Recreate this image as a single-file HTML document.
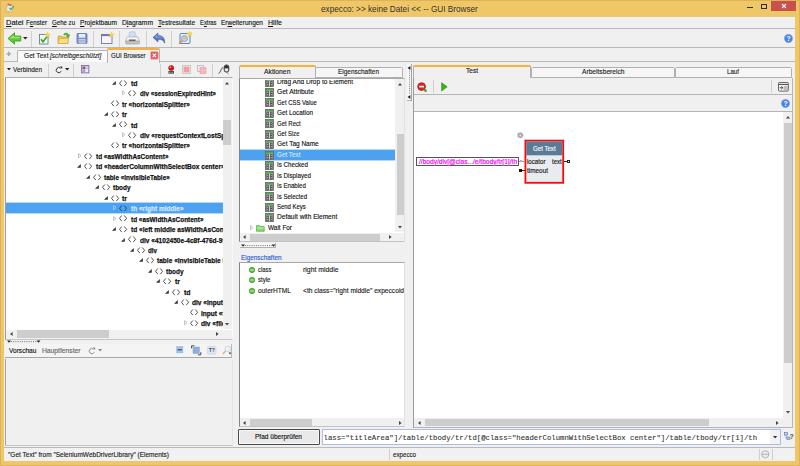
<!DOCTYPE html>
<html><head><meta charset="utf-8"><title>expecco</title>
<style>
*{box-sizing:border-box;margin:0;padding:0}
html,body{width:800px;height:466px;overflow:hidden;background:#efc766;box-shadow:inset 0 0 0 1px #ddb25a;font-family:"Liberation Sans",sans-serif;font-size:8px;color:#111}
.a{position:absolute}
.t{position:absolute;white-space:nowrap;transform-origin:0 50%;color:#1c1c1c;-webkit-text-stroke:.15px currentColor}
.t.b{-webkit-text-stroke:.25px currentColor}
.b{font-weight:bold}
.i{font-style:italic}
.clip{position:absolute;overflow:hidden}
svg{position:absolute;overflow:visible}
</style></head><body>
<div class="t" style="left:321px;top:2.7px;font-size:9.6px;line-height:12.0px;transform:scaleX(0.855);color:#333;-webkit-text-stroke:0;">expecco: &gt;&gt; keine Datei &lt;&lt; -- GUI Browser</div>
<svg style="left:5px;top:3px" width="11" height="11" viewBox="0 0 11 11"><g transform="rotate(16 5 5.5)"><rect x="1.4" y="1.6" width="6.6" height="7.2" rx=".8" fill="#dfe6f4" stroke="#e0a050" stroke-width=".7"/><rect x="1.6" y="1.4" width="4" height="1.5" fill="#c06a60"/></g><path d="M4.6 5l1.3 1.6L8.8 3" stroke="#5cb83a" stroke-width="1.4" fill="none"/></svg>
<div class="a" style="left:771.3px;top:0.5px;width:24.7px;height:10.5px;background:#c9504d;"></div>
<svg style="left:771px;top:0px" width="25" height="11" viewBox="0 0 25 11"><path d="M11 4l4 4M15 4l-4 4" stroke="#fff" stroke-width="1.1"/></svg>
<div class="a" style="left:747px;top:7px;width:5.5px;height:1.4px;background:#2c2c2c;"></div>
<div class="a" style="left:761px;top:4px;width:6.3px;height:5.2px;background:transparent;border:1px solid #2c2c2c;border-top-width:1.6px"></div>
<div class="a" style="left:4.3px;top:17px;width:791px;height:444px;background:#f0f0f0;"></div>
<div class="t" style="left:6px;top:18.0px;font-size:8.0px;line-height:10.0px;transform:scaleX(0.937);color:#151515;"><u>D</u>atei</div>
<div class="t" style="left:26px;top:18.0px;font-size:8.0px;line-height:10.0px;transform:scaleX(0.774);color:#151515;">F<u>e</u>nster</div>
<div class="t" style="left:52px;top:18.0px;font-size:8.0px;line-height:10.0px;transform:scaleX(0.761);color:#151515;"><u>G</u>ehe zu</div>
<div class="t" style="left:80px;top:18.0px;font-size:8.0px;line-height:10.0px;transform:scaleX(0.824);color:#151515;"><u>P</u>rojektbaum</div>
<div class="t" style="left:122px;top:18.0px;font-size:8.0px;line-height:10.0px;transform:scaleX(0.840);color:#151515;">D<u>i</u>agramm</div>
<div class="t" style="left:158px;top:18.0px;font-size:8.0px;line-height:10.0px;transform:scaleX(0.816);color:#151515;"><u>T</u>estresultate</div>
<div class="t" style="left:200px;top:18.0px;font-size:8.0px;line-height:10.0px;transform:scaleX(0.728);color:#151515;">E<u>x</u>tras</div>
<div class="t" style="left:221px;top:18.0px;font-size:8.0px;line-height:10.0px;transform:scaleX(0.814);color:#151515;">Er<u>w</u>eiterungen</div>
<div class="t" style="left:268px;top:18.0px;font-size:8.0px;line-height:10.0px;transform:scaleX(0.875);color:#151515;"><u>H</u>ilfe</div>
<div class="a" style="left:4.3px;top:28.3px;width:791px;height:1px;background:#b9b9b9;"></div>
<div class="a" style="left:31px;top:30.5px;width:1px;height:16px;background:#d0d0d0;"></div>
<div class="a" style="left:93.3px;top:30.5px;width:1px;height:16px;background:#d0d0d0;"></div>
<div class="a" style="left:119px;top:30.5px;width:1px;height:16px;background:#d0d0d0;"></div>
<div class="a" style="left:146px;top:30.5px;width:1px;height:16px;background:#d0d0d0;"></div>
<div class="a" style="left:171px;top:30.5px;width:1px;height:16px;background:#d0d0d0;"></div>
<div class="a" style="left:4.3px;top:46.5px;width:791px;height:1px;background:#b9b9b9;"></div>
<svg style="left:7px;top:32px" width="16" height="13" viewBox="0 0 16 13"><path d="M1 6.5L7.5 .8V4h6.3v5H7.5v3.2z" fill="#5ec832" stroke="#3a9a1c" stroke-width=".8" stroke-linejoin="round"/><path d="M2.6 6.4L6.8 2.8v2h6v1.4z" fill="#a6ec7c" opacity=".8"/></svg>
<svg style="left:23px;top:37px" width="5" height="3" viewBox="0 0 5 3"><path d="M0 0h4.6L2.3 2.6z" fill="#222"/></svg>
<svg style="left:38px;top:32px" width="13" height="13" viewBox="0 0 13 13"><rect x="1.5" y="2.5" width="8.5" height="9.5" fill="#f4f6f8" stroke="#6c8294" stroke-width=".9"/><path d="M3 7.2l2 2.6L9 4.4" stroke="#2fae22" stroke-width="1.6" fill="none"/><path d="M9.6 .3l.9 1.6 1.8.3-1.3 1.3.3 1.8-1.7-.9-1.6.9.3-1.8L7 2.2l1.8-.3z" fill="#f6d84a" stroke="#d8b020" stroke-width=".3"/></svg>
<svg style="left:57px;top:31px" width="14" height="14" viewBox="0 0 14 14"><path d="M1 5h4l1 1h5v6.5H1z" fill="#ecc458" stroke="#c89a34" stroke-width=".6"/><path d="M1 12.5l1.6-5h9.2l-1.3 5z" fill="#f8de82" stroke="#d0a43c" stroke-width=".6"/><path d="M6.5 3.2c2-1.8 4.4-1.4 5 .8l1.2-.4-1 3-2.6-1.6 1.1-.4c-.5-1.2-1.8-1.3-2.9-.4z" fill="#4cb82e" stroke="#2f8f1a" stroke-width=".4"/></svg>
<svg style="left:76px;top:32px" width="12" height="13" viewBox="0 0 12 13"><rect x="1" y="1.5" width="10" height="10" rx=".8" fill="#7e94ca" stroke="#5068a8" stroke-width=".7"/><rect x="2.8" y="2" width="6.4" height="3.6" fill="#e8eef8"/><rect x="2.6" y="7" width="6.8" height="4.5" fill="#c8d4ec"/><path d="M3 8.4h6M3 9.8h6" stroke="#8498c4" stroke-width=".6"/></svg>
<svg style="left:100px;top:32px" width="14" height="13" viewBox="0 0 14 13"><rect x="1.5" y="2.5" width="10.5" height="9" fill="#f6f4f6" stroke="#6a7ab4" stroke-width=".9"/><rect x="1.5" y="2.5" width="10.5" height="1.6" fill="#6a7ab4"/><path d="M11.4 .2l.9 1.6 1.8.3-1.3 1.3.3 1.8-1.7-.9-1.6.9.3-1.8-1.3-1.3 1.8-.3z" fill="#f6d84a" stroke="#d8b020" stroke-width=".3"/></svg>
<svg style="left:125px;top:31px" width="15" height="14" viewBox="0 0 15 14"><path d="M4.6 .8h5.2l1.4 5.4H3.6z" fill="#cfe0f6" stroke="#9cb4d4" stroke-width=".5" transform="rotate(-6 7.5 3.5)"/><path d="M2 6h11l1.4 4.2H.6z" fill="#f0f0f0" stroke="#a4a4a4" stroke-width=".6"/><path d="M.6 10.2h13.8v2.2l-.6.6H1.2l-.6-.6z" fill="#c4c4c4" stroke="#8c8c8c" stroke-width=".5"/><path d="M4 9.2h6.6" stroke="#555" stroke-width="1.3"/><path d="M2.4 7.2h10" stroke="#fff" stroke-width=".8"/></svg>
<svg style="left:152px;top:32px" width="14" height="13" viewBox="0 0 14 13"><path d="M1 5.4L6 1v2.6c4.4 0 7 2.2 6.6 7.6C11.6 8.2 9.6 7.2 6 7.3v2.6z" fill="#5878c6" stroke="#3c5aa4" stroke-width=".6" stroke-linejoin="round"/><path d="M2.4 5.3L5.4 2.6v1.8c2.6 0 4.6.6 5.8 2.4C9.6 5.8 7.8 5.6 5.4 5.7z" fill="#8ea8e4" opacity=".8"/></svg>
<svg style="left:177px;top:31px" width="16" height="14" viewBox="0 0 16 14"><rect x="3" y="2.5" width="10" height="10" rx="1" fill="#e6ecf8" stroke="#5a74b8" stroke-width=".9"/><circle cx="7.5" cy="7.5" r="3" fill="#b8d0f0" stroke="#6a8ac8" stroke-width=".6"/><circle cx="8" cy="6.8" r="1.5" fill="#f0c040"/><path d="M5.6 9.6L2 12.6" stroke="#d89030" stroke-width="1.4"/><path d="M12.6 .2l.9 1.6 1.8.3-1.3 1.3.3 1.8-1.7-.9-1.6.9.3-1.8-1.3-1.3 1.8-.3z" fill="#f6d84a" stroke="#d8b020" stroke-width=".3"/></svg>
<svg style="left:783.8px;top:33.7px" width="9" height="9" viewBox="0 0 9 9"><circle cx="4.5" cy="4.5" r="4.2" fill="#4a82e4" stroke="#8fb4f4" stroke-width=".6"/><text x="4.5" y="7.1" font-size="6.8" font-weight="bold" fill="#fff" text-anchor="middle" font-family="Liberation Sans, sans-serif">?</text></svg>
<div class="a" style="left:4.3px;top:61.2px;width:791px;height:1px;background:#b9b9b9;"></div>
<svg style="left:6.4px;top:51.4px" width="6" height="6" viewBox="0 0 6 6"><path d="M2.8 .6v4.4M.6 2.8h4.4" stroke="#a0a0a0" stroke-width="1.2"/></svg>
<div class="a" style="left:17.3px;top:50px;width:90.5px;height:12px;background:#fafafa;border:1px solid #b4b4b4;border-bottom:none;border-radius:1.5px 1.5px 0 0"></div>
<div class="t" style="left:24px;top:51.2px;font-size:8.0px;line-height:10.0px;transform:scaleX(0.826);">Get Text</div>
<div class="t i" style="left:50px;top:51.2px;font-size:8.0px;line-height:10.0px;transform:scaleX(0.797);">[schreibgeschützt]</div>
<div class="a" style="left:107.3px;top:48px;width:52.4px;height:14.6px;background:#f0f0f0;border:1px solid #b4b4b4;border-bottom:none;border-top:2px solid #f7b038;border-radius:1.5px 1.5px 0 0"></div>
<div class="t" style="left:111.4px;top:51.2px;font-size:8.0px;line-height:10.0px;transform:scaleX(0.756);">GUI Browser</div>
<svg style="left:149.8px;top:50.8px" width="9" height="9" viewBox="0 0 9 9"><rect x=".5" y=".5" width="7.8" height="7.8" rx="1.2" fill="#e05a64" stroke="#eeb0b4" stroke-width=".8"/><path d="M2.7 2.7l3.4 3.4M6.1 2.7L2.7 6.1" stroke="#fff" stroke-width="1.1"/></svg>
<svg style="left:7px;top:67.5px" width="4" height="3" viewBox="0 0 4 3"><path d="M0 0h4L2 2.6z" fill="#222"/></svg>
<div class="t" style="left:13px;top:64.5px;font-size:8.0px;line-height:10.0px;transform:scaleX(0.805);">Verbinden</div>
<div class="a" style="left:48.3px;top:63.5px;width:1px;height:13px;background:#cfcfcf;"></div>
<svg style="left:54.5px;top:65.5px" width="8" height="8" viewBox="0 0 8 8"><path d="M5.6 2.2A2.6 2.6 0 1 0 6.2 5.2" fill="none" stroke="#333" stroke-width="1"/><path d="M4.6 .4h2.6v2.6z" fill="#333"/></svg>
<svg style="left:65px;top:68px" width="5" height="3" viewBox="0 0 5 3"><path d="M0 0h4.4L2.2 2.5z" fill="#222"/></svg>
<div class="a" style="left:73px;top:63.5px;width:1px;height:13px;background:#cfcfcf;"></div>
<svg style="left:80.5px;top:64.8px" width="9" height="9" viewBox="0 0 9 9"><rect x=".5" y=".5" width="7.4" height="7.4" fill="#c8cce8" stroke="#6a6e9c" stroke-width=".8"/><rect x="1.6" y="1.6" width="2.6" height="2.4" fill="#d83848"/><rect x="4.6" y="4.6" width="2.4" height="2.2" fill="#f4f4fa"/><rect x="1.6" y="4.6" width="2.4" height="2.2" fill="#9aa0cc"/></svg>
<div class="a" style="left:160px;top:63.5px;width:1px;height:13px;background:#cfcfcf;"></div>
<svg style="left:166.5px;top:64.5px" width="9" height="10" viewBox="0 0 9 10"><circle cx="4.2" cy="3" r="2.6" fill="#d81818" stroke="#8c1010" stroke-width=".5"/><circle cx="3.4" cy="2.2" r=".9" fill="#f88"/><rect x="1.4" y="6" width="5.6" height="2.6" fill="#444"/><path d="M2 7.3h4.4" stroke="#ddd" stroke-width=".7" stroke-dasharray="1 .6"/></svg>
<svg style="left:181.5px;top:64.6px" width="9" height="9" viewBox="0 0 9 9"><rect x=".5" y=".5" width="8" height="8" fill="#f0e4e4" stroke="#c4c4c4" stroke-width=".8"/><rect x="1.7" y="1.7" width="5.6" height="5.6" fill="#f49aa0"/></svg>
<svg style="left:197px;top:64.8px" width="10" height="9" viewBox="0 0 10 9"><rect x=".5" y=".5" width="6" height="6" fill="#ececec" stroke="#b4b4b4" stroke-width=".7"/><rect x="3" y="2.6" width="6" height="6" fill="#f8b0b6" stroke="#e0a0a4" stroke-width=".6"/><path d="M3 5.6h6M6 2.6v6" stroke="#fbd0d2" stroke-width=".5"/></svg>
<div class="a" style="left:212.3px;top:63.5px;width:1px;height:13px;background:#cfcfcf;"></div>
<svg style="left:218px;top:64px" width="12" height="11" viewBox="0 0 12 11"><path d="M.5 9.5C3 9 2.5 4 5 3.5" fill="none" stroke="#333" stroke-width=".8"/><rect x="6.2" y="1" width="4.6" height="7" rx="2" fill="#e8e8e8" stroke="#222" stroke-width=".9"/><path d="M6.2 4h4.6M8.5 1v3" stroke="#222" stroke-width=".7"/><path d="M6.4 4V3a2.2 2.2 0 0 1 4.2 0v1z" fill="#333"/><path d="M8.5 8l2 1.8" stroke="#444" stroke-width=".7"/></svg>
<div class="a" style="left:5px;top:77.2px;width:227.5px;height:263px;background:#fff;border:1px solid #c6c6c6;border-left-color:#9c9c9c;border-top-color:#adadad;border-right-color:#f8f8f8"></div>
<div class="a" style="left:222.5px;top:78.3px;width:9px;height:251px;background:#f0f0f0;"></div>
<div class="a" style="left:223px;top:120px;width:8px;height:24.6px;background:#cdcdcd;"></div>
<svg style="left:225px;top:81.6px" width="4" height="3" viewBox="0 0 4 3"><path d="M0 2.6L2 0l2 2.6z" fill="#444"/></svg>
<svg style="left:225px;top:323px" width="4" height="3" viewBox="0 0 4 3"><path d="M0 0h4L2 2.6z" fill="#444"/></svg>
<div class="a" style="left:6px;top:329.5px;width:225.5px;height:9.8px;background:#f0f0f0;"></div>
<div class="a" style="left:16.5px;top:330px;width:92.5px;height:7.8px;background:#cdcdcd;"></div>
<svg style="left:10px;top:332px" width="3" height="4" viewBox="0 0 3 4"><path d="M2.6 0v4L0 2z" fill="#444"/></svg>
<svg style="left:215.5px;top:332px" width="3" height="4" viewBox="0 0 3 4"><path d="M0 0v4l2.6-2z" fill="#444"/></svg>
<div class="clip" style="left:6px;top:78.3px;width:216.5px;height:251.2px">
<div class="t b" style="left:124.7px;top:0.5px;font-size:8.0px;line-height:10.0px;transform:scaleX(0.861);color:#111;">td</div>
<svg style="left:113.3px;top:1.3px" width="8" height="7" viewBox="0 0 8 7"><path d="M2.8 .5L.5 3.3l2.3 2.8M5.3 .5L7.6 3.3 5.3 6.1" fill="none" stroke="#333" stroke-width=".85"/></svg>
<svg style="left:106.4px;top:2.5px" width="4" height="4" viewBox="0 0 4 4"><path d="M3.8 0v3.8H0z" fill="#333"/></svg>
<div class="t b" style="left:133.5px;top:10.95px;font-size:8.0px;line-height:10.0px;transform:scaleX(0.781);color:#111;">div &laquo;sessionExpiredHint&raquo;</div>
<svg style="left:122.1px;top:11.75px" width="8" height="7" viewBox="0 0 8 7"><path d="M2.8 .5L.5 3.3l2.3 2.8M5.3 .5L7.6 3.3 5.3 6.1" fill="none" stroke="#333" stroke-width=".85"/></svg>
<svg style="left:115.9px;top:12.15px" width="4" height="6" viewBox="0 0 4 6"><path d="M.5 .6v4.2L3 2.7z" fill="none" stroke="#a8a8a8" stroke-width=".7"/></svg>
<div class="t b" style="left:115.9px;top:21.4px;font-size:8.0px;line-height:10.0px;transform:scaleX(0.822);color:#111;">tr &laquo;horizontalSplitter&raquo;</div>
<svg style="left:104.5px;top:22.2px" width="8" height="7" viewBox="0 0 8 7"><path d="M2.8 .5L.5 3.3l2.3 2.8M5.3 .5L7.6 3.3 5.3 6.1" fill="none" stroke="#333" stroke-width=".85"/></svg>
<div class="t b" style="left:115.9px;top:31.85px;font-size:8.0px;line-height:10.0px;transform:scaleX(0.865);color:#111;">tr</div>
<svg style="left:104.5px;top:32.65px" width="8" height="7" viewBox="0 0 8 7"><path d="M2.8 .5L.5 3.3l2.3 2.8M5.3 .5L7.6 3.3 5.3 6.1" fill="none" stroke="#333" stroke-width=".85"/></svg>
<svg style="left:97.6px;top:33.85px" width="4" height="4" viewBox="0 0 4 4"><path d="M3.8 0v3.8H0z" fill="#333"/></svg>
<div class="t b" style="left:124.7px;top:42.3px;font-size:8.0px;line-height:10.0px;transform:scaleX(0.861);color:#111;">td</div>
<svg style="left:113.3px;top:43.1px" width="8" height="7" viewBox="0 0 8 7"><path d="M2.8 .5L.5 3.3l2.3 2.8M5.3 .5L7.6 3.3 5.3 6.1" fill="none" stroke="#333" stroke-width=".85"/></svg>
<svg style="left:106.4px;top:44.3px" width="4" height="4" viewBox="0 0 4 4"><path d="M3.8 0v3.8H0z" fill="#333"/></svg>
<div class="t b" style="left:133.5px;top:52.75px;font-size:8.0px;line-height:10.0px;transform:scaleX(0.820);color:#111;">div &laquo;requestContextLostSplitter&raquo;</div>
<svg style="left:122.1px;top:53.55px" width="8" height="7" viewBox="0 0 8 7"><path d="M2.8 .5L.5 3.3l2.3 2.8M5.3 .5L7.6 3.3 5.3 6.1" fill="none" stroke="#333" stroke-width=".85"/></svg>
<svg style="left:115.9px;top:53.95px" width="4" height="6" viewBox="0 0 4 6"><path d="M.5 .6v4.2L3 2.7z" fill="none" stroke="#a8a8a8" stroke-width=".7"/></svg>
<div class="t b" style="left:115.9px;top:63.2px;font-size:8.0px;line-height:10.0px;transform:scaleX(0.822);color:#111;">tr &laquo;horizontalSplitter&raquo;</div>
<svg style="left:104.5px;top:64.0px" width="8" height="7" viewBox="0 0 8 7"><path d="M2.8 .5L.5 3.3l2.3 2.8M5.3 .5L7.6 3.3 5.3 6.1" fill="none" stroke="#333" stroke-width=".85"/></svg>
<div class="t b" style="left:89.5px;top:73.65px;font-size:8.0px;line-height:10.0px;transform:scaleX(0.804);color:#111;">td &laquo;asWidthAsContent&raquo;</div>
<svg style="left:78.1px;top:74.45px" width="8" height="7" viewBox="0 0 8 7"><path d="M2.8 .5L.5 3.3l2.3 2.8M5.3 .5L7.6 3.3 5.3 6.1" fill="none" stroke="#333" stroke-width=".85"/></svg>
<svg style="left:71.9px;top:74.85px" width="4" height="6" viewBox="0 0 4 6"><path d="M.5 .6v4.2L3 2.7z" fill="none" stroke="#a8a8a8" stroke-width=".7"/></svg>
<div class="t b" style="left:89.5px;top:84.1px;font-size:8.0px;line-height:10.0px;transform:scaleX(0.820);color:#111;">td &laquo;headerColumnWithSelectBox center&raquo;</div>
<svg style="left:78.1px;top:84.9px" width="8" height="7" viewBox="0 0 8 7"><path d="M2.8 .5L.5 3.3l2.3 2.8M5.3 .5L7.6 3.3 5.3 6.1" fill="none" stroke="#333" stroke-width=".85"/></svg>
<svg style="left:71.2px;top:86.1px" width="4" height="4" viewBox="0 0 4 4"><path d="M3.8 0v3.8H0z" fill="#333"/></svg>
<div class="t b" style="left:98.3px;top:94.55px;font-size:8.0px;line-height:10.0px;transform:scaleX(0.801);color:#111;">table &laquo;invisibleTable&raquo;</div>
<svg style="left:86.9px;top:95.35px" width="8" height="7" viewBox="0 0 8 7"><path d="M2.8 .5L.5 3.3l2.3 2.8M5.3 .5L7.6 3.3 5.3 6.1" fill="none" stroke="#333" stroke-width=".85"/></svg>
<svg style="left:80.0px;top:96.55px" width="4" height="4" viewBox="0 0 4 4"><path d="M3.8 0v3.8H0z" fill="#333"/></svg>
<div class="t b" style="left:107.1px;top:105.0px;font-size:8.0px;line-height:10.0px;transform:scaleX(0.804);color:#111;">tbody</div>
<svg style="left:95.7px;top:105.8px" width="8" height="7" viewBox="0 0 8 7"><path d="M2.8 .5L.5 3.3l2.3 2.8M5.3 .5L7.6 3.3 5.3 6.1" fill="none" stroke="#333" stroke-width=".85"/></svg>
<svg style="left:88.8px;top:107.0px" width="4" height="4" viewBox="0 0 4 4"><path d="M3.8 0v3.8H0z" fill="#333"/></svg>
<div class="t b" style="left:115.9px;top:115.45px;font-size:8.0px;line-height:10.0px;transform:scaleX(0.865);color:#111;">tr</div>
<svg style="left:104.5px;top:116.25px" width="8" height="7" viewBox="0 0 8 7"><path d="M2.8 .5L.5 3.3l2.3 2.8M5.3 .5L7.6 3.3 5.3 6.1" fill="none" stroke="#333" stroke-width=".85"/></svg>
<svg style="left:97.6px;top:117.45px" width="4" height="4" viewBox="0 0 4 4"><path d="M3.8 0v3.8H0z" fill="#333"/></svg>
<div class="a" style="left:0px;top:124.8px;width:216.5px;height:9.8px;background:#4ca1f1;box-shadow:0 0 0 .5px #6fb2f2"></div>
<div class="t b" style="left:124.7px;top:125.9px;font-size:8.0px;line-height:10.0px;transform:scaleX(0.815);color:#d4e7fc;">th &laquo;right middle&raquo;</div>
<svg style="left:113.3px;top:126.7px" width="8" height="7" viewBox="0 0 8 7"><path d="M2.8 .5L.5 3.3l2.3 2.8M5.3 .5L7.6 3.3 5.3 6.1" fill="none" stroke="#1c3a5c" stroke-width=".85"/></svg>
<svg style="left:107.1px;top:127.1px" width="4" height="6" viewBox="0 0 4 6"><path d="M.5 .6v4.2L3 2.7z" fill="none" stroke="#c4d8ee" stroke-width=".7"/></svg>
<div class="t b" style="left:124.7px;top:136.35px;font-size:8.0px;line-height:10.0px;transform:scaleX(0.804);color:#111;">td &laquo;asWidthAsContent&raquo;</div>
<svg style="left:113.3px;top:137.15px" width="8" height="7" viewBox="0 0 8 7"><path d="M2.8 .5L.5 3.3l2.3 2.8M5.3 .5L7.6 3.3 5.3 6.1" fill="none" stroke="#333" stroke-width=".85"/></svg>
<svg style="left:107.1px;top:137.55px" width="4" height="6" viewBox="0 0 4 6"><path d="M.5 .6v4.2L3 2.7z" fill="none" stroke="#a8a8a8" stroke-width=".7"/></svg>
<div class="t b" style="left:124.7px;top:146.8px;font-size:8.0px;line-height:10.0px;transform:scaleX(0.820);color:#111;">td &laquo;left middle asWidthAsContent&raquo;</div>
<svg style="left:113.3px;top:147.6px" width="8" height="7" viewBox="0 0 8 7"><path d="M2.8 .5L.5 3.3l2.3 2.8M5.3 .5L7.6 3.3 5.3 6.1" fill="none" stroke="#333" stroke-width=".85"/></svg>
<svg style="left:106.4px;top:148.8px" width="4" height="4" viewBox="0 0 4 4"><path d="M3.8 0v3.8H0z" fill="#333"/></svg>
<div class="t b" style="left:133.5px;top:157.25px;font-size:8.0px;line-height:10.0px;transform:scaleX(0.820);color:#111;">div &laquo;4102450e-4c8f-476d-9f2a&raquo;</div>
<svg style="left:122.1px;top:158.05px" width="8" height="7" viewBox="0 0 8 7"><path d="M2.8 .5L.5 3.3l2.3 2.8M5.3 .5L7.6 3.3 5.3 6.1" fill="none" stroke="#333" stroke-width=".85"/></svg>
<svg style="left:115.2px;top:159.25px" width="4" height="4" viewBox="0 0 4 4"><path d="M3.8 0v3.8H0z" fill="#333"/></svg>
<div class="t b" style="left:142.3px;top:167.7px;font-size:8.0px;line-height:10.0px;transform:scaleX(0.779);color:#111;">div</div>
<svg style="left:130.9px;top:168.5px" width="8" height="7" viewBox="0 0 8 7"><path d="M2.8 .5L.5 3.3l2.3 2.8M5.3 .5L7.6 3.3 5.3 6.1" fill="none" stroke="#333" stroke-width=".85"/></svg>
<svg style="left:124.0px;top:169.7px" width="4" height="4" viewBox="0 0 4 4"><path d="M3.8 0v3.8H0z" fill="#333"/></svg>
<div class="t b" style="left:151.1px;top:178.15px;font-size:8.0px;line-height:10.0px;transform:scaleX(0.820);color:#111;">table &laquo;invisibleTable inputTable&raquo;</div>
<svg style="left:139.7px;top:178.95px" width="8" height="7" viewBox="0 0 8 7"><path d="M2.8 .5L.5 3.3l2.3 2.8M5.3 .5L7.6 3.3 5.3 6.1" fill="none" stroke="#333" stroke-width=".85"/></svg>
<svg style="left:132.8px;top:180.15px" width="4" height="4" viewBox="0 0 4 4"><path d="M3.8 0v3.8H0z" fill="#333"/></svg>
<div class="t b" style="left:159.9px;top:188.6px;font-size:8.0px;line-height:10.0px;transform:scaleX(0.804);color:#111;">tbody</div>
<svg style="left:148.5px;top:189.4px" width="8" height="7" viewBox="0 0 8 7"><path d="M2.8 .5L.5 3.3l2.3 2.8M5.3 .5L7.6 3.3 5.3 6.1" fill="none" stroke="#333" stroke-width=".85"/></svg>
<svg style="left:141.6px;top:190.6px" width="4" height="4" viewBox="0 0 4 4"><path d="M3.8 0v3.8H0z" fill="#333"/></svg>
<div class="t b" style="left:168.7px;top:199.05px;font-size:8.0px;line-height:10.0px;transform:scaleX(0.865);color:#111;">tr</div>
<svg style="left:157.3px;top:199.85px" width="8" height="7" viewBox="0 0 8 7"><path d="M2.8 .5L.5 3.3l2.3 2.8M5.3 .5L7.6 3.3 5.3 6.1" fill="none" stroke="#333" stroke-width=".85"/></svg>
<svg style="left:150.4px;top:201.05px" width="4" height="4" viewBox="0 0 4 4"><path d="M3.8 0v3.8H0z" fill="#333"/></svg>
<div class="t b" style="left:177.5px;top:209.5px;font-size:8.0px;line-height:10.0px;transform:scaleX(0.861);color:#111;">td</div>
<svg style="left:166.1px;top:210.3px" width="8" height="7" viewBox="0 0 8 7"><path d="M2.8 .5L.5 3.3l2.3 2.8M5.3 .5L7.6 3.3 5.3 6.1" fill="none" stroke="#333" stroke-width=".85"/></svg>
<svg style="left:159.2px;top:211.5px" width="4" height="4" viewBox="0 0 4 4"><path d="M3.8 0v3.8H0z" fill="#333"/></svg>
<div class="t b" style="left:186.3px;top:219.95px;font-size:8.0px;line-height:10.0px;transform:scaleX(0.820);color:#111;">div &laquo;inputField&raquo;</div>
<svg style="left:174.9px;top:220.75px" width="8" height="7" viewBox="0 0 8 7"><path d="M2.8 .5L.5 3.3l2.3 2.8M5.3 .5L7.6 3.3 5.3 6.1" fill="none" stroke="#333" stroke-width=".85"/></svg>
<svg style="left:168.0px;top:221.95px" width="4" height="4" viewBox="0 0 4 4"><path d="M3.8 0v3.8H0z" fill="#333"/></svg>
<div class="t b" style="left:195.1px;top:230.4px;font-size:8.0px;line-height:10.0px;transform:scaleX(0.820);color:#111;">input &laquo;text&raquo;</div>
<svg style="left:183.7px;top:231.2px" width="8" height="7" viewBox="0 0 8 7"><path d="M2.8 .5L.5 3.3l2.3 2.8M5.3 .5L7.6 3.3 5.3 6.1" fill="none" stroke="#333" stroke-width=".85"/></svg>
<div class="t b" style="left:195.1px;top:240.85px;font-size:8.0px;line-height:10.0px;transform:scaleX(0.820);color:#111;">div &laquo;fileUpload&raquo;</div>
<svg style="left:183.7px;top:241.65px" width="8" height="7" viewBox="0 0 8 7"><path d="M2.8 .5L.5 3.3l2.3 2.8M5.3 .5L7.6 3.3 5.3 6.1" fill="none" stroke="#333" stroke-width=".85"/></svg>
<svg style="left:177.5px;top:242.05px" width="4" height="6" viewBox="0 0 4 6"><path d="M.5 .6v4.2L3 2.7z" fill="none" stroke="#a8a8a8" stroke-width=".7"/></svg>
</div>
<svg style="left:7px;top:339.6px" width="36" height="4" viewBox="0 0 36 4"><path d="M0 .4h4L2 2.8zM29.5 .4h4L31.5 2.8z" fill="#222"/><path d="M4 1.6h26" stroke="#555" stroke-width=".8" stroke-dasharray="1 1.2"/></svg>
<div class="a" style="left:5px;top:343.8px;width:226.8px;height:13.9px;background:#f4f4f4;border-bottom:1px solid #a8a8a8;border-right:1px solid #b8b8b8"></div>
<div class="t" style="left:8.6px;top:345.8px;font-size:8.0px;line-height:10.0px;transform:scaleX(0.821);color:#111;">Vorschau</div>
<div class="t" style="left:42px;top:345.8px;font-size:8.0px;line-height:10.0px;transform:scaleX(0.841);color:#666;">Hauptfenster</div>
<svg style="left:87.5px;top:346.6px" width="8" height="8" viewBox="0 0 8 8"><path d="M5.6 2.2A2.6 2.6 0 1 0 6.2 5.2" fill="none" stroke="#8a8a8a" stroke-width="1"/><path d="M4.6 .4h2.6v2.6z" fill="#8a8a8a"/></svg>
<svg style="left:98px;top:349.2px" width="5" height="3" viewBox="0 0 5 3"><path d="M0 0h4.2L2.1 2.4z" fill="#8a8a8a"/></svg>
<svg style="left:176px;top:346.2px" width="8" height="8" viewBox="0 0 8 8"><rect x=".3" y=".3" width="6.8" height="6.8" fill="#8eb2de"/><path d="M2.5 .3v6.8M4.9 .3v6.8M.3 2.5h6.8M.3 4.9h6.8" stroke="#dce8f8" stroke-width=".5"/><rect x="1.6" y="2.9" width="4.2" height="1.6" fill="#3c5c94"/></svg>
<svg style="left:190.5px;top:344.6px" width="11" height="11" viewBox="0 0 11 11"><rect x="2" y="2" width="6.4" height="6.4" fill="#8cb0dc" stroke="#7ea2d0" stroke-width=".5"/><path d="M.6 3.4V.8h2.8M9.8 7.2v2.6H7" fill="none" stroke="#333" stroke-width=".9"/></svg>
<svg style="left:207px;top:345.6px" width="10" height="9" viewBox="0 0 10 9"><rect x=".4" y=".4" width="8.6" height="7.8" rx=".8" fill="#dfe7f3" stroke="#c4cede" stroke-width=".6"/><text x="4.7" y="6.3" font-size="5" font-weight="bold" fill="#3a4a68" text-anchor="middle" font-family="Liberation Sans, sans-serif">T?</text></svg>
<svg style="left:221.5px;top:345px" width="10" height="10" viewBox="0 0 10 10"><circle cx="5.8" cy="3.8" r="2.8" fill="#eaf3fc" stroke="#b4c8dc" stroke-width=".7"/><path d="M3.8 5.8L.8 9" stroke="#e4b468" stroke-width="1.3"/><path d="M6.6 7.6h2.8L8 9.4z" fill="#444"/></svg>
<div class="a" style="left:5px;top:358.5px;width:227.5px;height:87.5px;background:#f0f0f0;border:1px solid #c4c4c4;border-top:none;border-left-color:#a4a4a4;border-right-color:#e4e4e4"></div>
<div class="a" style="left:315.3px;top:66.5px;width:87.5px;height:11px;background:#f6f6f6;border:1px solid #b0b0b0;border-radius:1.5px 1.5px 0 0"></div>
<div class="t" style="left:338px;top:67.4px;font-size:8.0px;line-height:10.0px;transform:scaleX(0.809);">Eigenschaften</div>
<div class="a" style="left:239.3px;top:64.6px;width:76.4px;height:13.2px;background:#f0f0f0;border:1px solid #b0b0b0;border-bottom:none;border-top:2px solid #f7b038;border-radius:1.5px 1.5px 0 0"></div>
<div class="t" style="left:264.4px;top:67.0px;font-size:8.0px;line-height:10.0px;transform:scaleX(0.848);">Aktionen</div>
<div class="a" style="left:238.8px;top:77.6px;width:166px;height:164.8px;background:#fff;border:1px solid #c4c4c4;border-left-color:#858585;border-top-color:#a8a8a8;border-right-color:#e2e2e2"></div>
<div class="a" style="left:395.3px;top:78.6px;width:8.6px;height:153.4px;background:#f0f0f0;"></div>
<div class="a" style="left:396.5px;top:133.5px;width:7.4px;height:81.5px;background:#cdcdcd;"></div>
<svg style="left:398px;top:82.5px" width="4" height="3" viewBox="0 0 4 3"><path d="M0 2.6L2 0l2 2.6z" fill="#444"/></svg>
<svg style="left:398px;top:226px" width="4" height="3" viewBox="0 0 4 3"><path d="M0 0h4L2 2.6z" fill="#444"/></svg>
<div class="a" style="left:239.8px;top:232.6px;width:164px;height:8.9px;background:#f0f0f0;"></div>
<div class="a" style="left:250px;top:234.3px;width:130px;height:6.6px;background:#cdcdcd;"></div>
<svg style="left:243px;top:235.4px" width="3" height="4" viewBox="0 0 3 4"><path d="M2.6 0v4L0 2z" fill="#444"/></svg>
<svg style="left:389px;top:235.4px" width="3" height="4" viewBox="0 0 3 4"><path d="M0 0v4l2.6-2z" fill="#444"/></svg>
<div class="clip" style="left:239.8px;top:79.6px;width:155.5px;height:152.4px">
<div class="t" style="left:37.0px;top:-2.7px;font-size:8.0px;line-height:10.0px;transform:scaleX(0.814);color:#111;">Drag And Drop to Element</div>
<svg style="left:25.1px;top:-2.1px" width="9" height="9" viewBox="0 0 9 9"><rect x=".4" y=".4" width="8.1" height="8.1" fill="#a4a4a4" stroke="#606060" stroke-width=".8"/><rect x=".8" y=".8" width="7.3" height="1.6" fill="#48b048"/><rect x="1.5" y="2.9" width="2.3" height="5.2" fill="#505050"/><rect x="5.1" y="2.9" width="2.3" height="5.2" fill="#505050"/><path d="M2.65 3.7v1.2M2.65 6v1.3M6.25 3.7v1.2M6.25 6v1.3" stroke="#c8c8c8" stroke-width=".9"/><path d="M4.45 2.6v5.8" stroke="#e0e0e0" stroke-width=".7"/></svg>
<div class="t" style="left:37.0px;top:7.73px;font-size:8.0px;line-height:10.0px;transform:scaleX(0.828);color:#111;">Get Attribute</div>
<svg style="left:25.1px;top:8.33px" width="9" height="9" viewBox="0 0 9 9"><rect x=".4" y=".4" width="8.1" height="8.1" fill="#a4a4a4" stroke="#606060" stroke-width=".8"/><rect x=".8" y=".8" width="7.3" height="1.6" fill="#48b048"/><rect x="1.5" y="2.9" width="2.3" height="5.2" fill="#505050"/><rect x="5.1" y="2.9" width="2.3" height="5.2" fill="#505050"/><path d="M2.65 3.7v1.2M2.65 6v1.3M6.25 3.7v1.2M6.25 6v1.3" stroke="#c8c8c8" stroke-width=".9"/><path d="M4.45 2.6v5.8" stroke="#e0e0e0" stroke-width=".7"/></svg>
<div class="t" style="left:37.0px;top:18.16px;font-size:8.0px;line-height:10.0px;transform:scaleX(0.742);color:#111;">Get CSS Value</div>
<svg style="left:25.1px;top:18.76px" width="9" height="9" viewBox="0 0 9 9"><rect x=".4" y=".4" width="8.1" height="8.1" fill="#a4a4a4" stroke="#606060" stroke-width=".8"/><rect x=".8" y=".8" width="7.3" height="1.6" fill="#48b048"/><rect x="1.5" y="2.9" width="2.3" height="5.2" fill="#505050"/><rect x="5.1" y="2.9" width="2.3" height="5.2" fill="#505050"/><path d="M2.65 3.7v1.2M2.65 6v1.3M6.25 3.7v1.2M6.25 6v1.3" stroke="#c8c8c8" stroke-width=".9"/><path d="M4.45 2.6v5.8" stroke="#e0e0e0" stroke-width=".7"/></svg>
<div class="t" style="left:37.0px;top:28.59px;font-size:8.0px;line-height:10.0px;transform:scaleX(0.794);color:#111;">Get Location</div>
<svg style="left:25.1px;top:29.19px" width="9" height="9" viewBox="0 0 9 9"><rect x=".4" y=".4" width="8.1" height="8.1" fill="#a4a4a4" stroke="#606060" stroke-width=".8"/><rect x=".8" y=".8" width="7.3" height="1.6" fill="#48b048"/><rect x="1.5" y="2.9" width="2.3" height="5.2" fill="#505050"/><rect x="5.1" y="2.9" width="2.3" height="5.2" fill="#505050"/><path d="M2.65 3.7v1.2M2.65 6v1.3M6.25 3.7v1.2M6.25 6v1.3" stroke="#c8c8c8" stroke-width=".9"/><path d="M4.45 2.6v5.8" stroke="#e0e0e0" stroke-width=".7"/></svg>
<div class="t" style="left:37.0px;top:39.02px;font-size:8.0px;line-height:10.0px;transform:scaleX(0.748);color:#111;">Get Rect</div>
<svg style="left:25.1px;top:39.62px" width="9" height="9" viewBox="0 0 9 9"><rect x=".4" y=".4" width="8.1" height="8.1" fill="#a4a4a4" stroke="#606060" stroke-width=".8"/><rect x=".8" y=".8" width="7.3" height="1.6" fill="#48b048"/><rect x="1.5" y="2.9" width="2.3" height="5.2" fill="#505050"/><rect x="5.1" y="2.9" width="2.3" height="5.2" fill="#505050"/><path d="M2.65 3.7v1.2M2.65 6v1.3M6.25 3.7v1.2M6.25 6v1.3" stroke="#c8c8c8" stroke-width=".9"/><path d="M4.45 2.6v5.8" stroke="#e0e0e0" stroke-width=".7"/></svg>
<div class="t" style="left:37.0px;top:49.45px;font-size:8.0px;line-height:10.0px;transform:scaleX(0.730);color:#111;">Get Size</div>
<svg style="left:25.1px;top:50.05px" width="9" height="9" viewBox="0 0 9 9"><rect x=".4" y=".4" width="8.1" height="8.1" fill="#a4a4a4" stroke="#606060" stroke-width=".8"/><rect x=".8" y=".8" width="7.3" height="1.6" fill="#48b048"/><rect x="1.5" y="2.9" width="2.3" height="5.2" fill="#505050"/><rect x="5.1" y="2.9" width="2.3" height="5.2" fill="#505050"/><path d="M2.65 3.7v1.2M2.65 6v1.3M6.25 3.7v1.2M6.25 6v1.3" stroke="#c8c8c8" stroke-width=".9"/><path d="M4.45 2.6v5.8" stroke="#e0e0e0" stroke-width=".7"/></svg>
<div class="t" style="left:37.0px;top:59.88px;font-size:8.0px;line-height:10.0px;transform:scaleX(0.811);color:#111;">Get Tag Name</div>
<svg style="left:25.1px;top:60.48px" width="9" height="9" viewBox="0 0 9 9"><rect x=".4" y=".4" width="8.1" height="8.1" fill="#a4a4a4" stroke="#606060" stroke-width=".8"/><rect x=".8" y=".8" width="7.3" height="1.6" fill="#48b048"/><rect x="1.5" y="2.9" width="2.3" height="5.2" fill="#505050"/><rect x="5.1" y="2.9" width="2.3" height="5.2" fill="#505050"/><path d="M2.65 3.7v1.2M2.65 6v1.3M6.25 3.7v1.2M6.25 6v1.3" stroke="#c8c8c8" stroke-width=".9"/><path d="M4.45 2.6v5.8" stroke="#e0e0e0" stroke-width=".7"/></svg>
<div class="a" style="left:0px;top:70.11px;width:155.5px;height:9.8px;background:#4ca1f1;box-shadow:0 0 0 .5px #6fb2f2"></div>
<div class="t" style="left:37.0px;top:70.31px;font-size:8.0px;line-height:10.0px;transform:scaleX(0.789);color:#d4e7fc;">Get Text</div>
<svg style="left:25.1px;top:70.91px" width="9" height="9" viewBox="0 0 9 9"><rect x=".4" y=".4" width="8.1" height="8.1" fill="#a4a4a4" stroke="#606060" stroke-width=".8"/><rect x=".8" y=".8" width="7.3" height="1.6" fill="#48b048"/><rect x="1.5" y="2.9" width="2.3" height="5.2" fill="#505050"/><rect x="5.1" y="2.9" width="2.3" height="5.2" fill="#505050"/><path d="M2.65 3.7v1.2M2.65 6v1.3M6.25 3.7v1.2M6.25 6v1.3" stroke="#c8c8c8" stroke-width=".9"/><path d="M4.45 2.6v5.8" stroke="#e0e0e0" stroke-width=".7"/></svg>
<div class="t" style="left:37.0px;top:80.74px;font-size:8.0px;line-height:10.0px;transform:scaleX(0.775);color:#111;">Is Checked</div>
<svg style="left:25.1px;top:81.34px" width="9" height="9" viewBox="0 0 9 9"><rect x=".4" y=".4" width="8.1" height="8.1" fill="#a4a4a4" stroke="#606060" stroke-width=".8"/><rect x=".8" y=".8" width="7.3" height="1.6" fill="#48b048"/><rect x="1.5" y="2.9" width="2.3" height="5.2" fill="#505050"/><rect x="5.1" y="2.9" width="2.3" height="5.2" fill="#505050"/><path d="M2.65 3.7v1.2M2.65 6v1.3M6.25 3.7v1.2M6.25 6v1.3" stroke="#c8c8c8" stroke-width=".9"/><path d="M4.45 2.6v5.8" stroke="#e0e0e0" stroke-width=".7"/></svg>
<div class="t" style="left:37.0px;top:91.17px;font-size:8.0px;line-height:10.0px;transform:scaleX(0.780);color:#111;">Is Displayed</div>
<svg style="left:25.1px;top:91.77px" width="9" height="9" viewBox="0 0 9 9"><rect x=".4" y=".4" width="8.1" height="8.1" fill="#a4a4a4" stroke="#606060" stroke-width=".8"/><rect x=".8" y=".8" width="7.3" height="1.6" fill="#48b048"/><rect x="1.5" y="2.9" width="2.3" height="5.2" fill="#505050"/><rect x="5.1" y="2.9" width="2.3" height="5.2" fill="#505050"/><path d="M2.65 3.7v1.2M2.65 6v1.3M6.25 3.7v1.2M6.25 6v1.3" stroke="#c8c8c8" stroke-width=".9"/><path d="M4.45 2.6v5.8" stroke="#e0e0e0" stroke-width=".7"/></svg>
<div class="t" style="left:37.0px;top:101.6px;font-size:8.0px;line-height:10.0px;transform:scaleX(0.762);color:#111;">Is Enabled</div>
<svg style="left:25.1px;top:102.2px" width="9" height="9" viewBox="0 0 9 9"><rect x=".4" y=".4" width="8.1" height="8.1" fill="#a4a4a4" stroke="#606060" stroke-width=".8"/><rect x=".8" y=".8" width="7.3" height="1.6" fill="#48b048"/><rect x="1.5" y="2.9" width="2.3" height="5.2" fill="#505050"/><rect x="5.1" y="2.9" width="2.3" height="5.2" fill="#505050"/><path d="M2.65 3.7v1.2M2.65 6v1.3M6.25 3.7v1.2M6.25 6v1.3" stroke="#c8c8c8" stroke-width=".9"/><path d="M4.45 2.6v5.8" stroke="#e0e0e0" stroke-width=".7"/></svg>
<div class="t" style="left:37.0px;top:112.03px;font-size:8.0px;line-height:10.0px;transform:scaleX(0.758);color:#111;">Is Selected</div>
<svg style="left:25.1px;top:112.63px" width="9" height="9" viewBox="0 0 9 9"><rect x=".4" y=".4" width="8.1" height="8.1" fill="#a4a4a4" stroke="#606060" stroke-width=".8"/><rect x=".8" y=".8" width="7.3" height="1.6" fill="#48b048"/><rect x="1.5" y="2.9" width="2.3" height="5.2" fill="#505050"/><rect x="5.1" y="2.9" width="2.3" height="5.2" fill="#505050"/><path d="M2.65 3.7v1.2M2.65 6v1.3M6.25 3.7v1.2M6.25 6v1.3" stroke="#c8c8c8" stroke-width=".9"/><path d="M4.45 2.6v5.8" stroke="#e0e0e0" stroke-width=".7"/></svg>
<div class="t" style="left:37.0px;top:122.46px;font-size:8.0px;line-height:10.0px;transform:scaleX(0.744);color:#111;">Send Keys</div>
<svg style="left:25.1px;top:123.06px" width="9" height="9" viewBox="0 0 9 9"><rect x=".4" y=".4" width="8.1" height="8.1" fill="#a4a4a4" stroke="#606060" stroke-width=".8"/><rect x=".8" y=".8" width="7.3" height="1.6" fill="#48b048"/><rect x="1.5" y="2.9" width="2.3" height="5.2" fill="#505050"/><rect x="5.1" y="2.9" width="2.3" height="5.2" fill="#505050"/><path d="M2.65 3.7v1.2M2.65 6v1.3M6.25 3.7v1.2M6.25 6v1.3" stroke="#c8c8c8" stroke-width=".9"/><path d="M4.45 2.6v5.8" stroke="#e0e0e0" stroke-width=".7"/></svg>
<div class="t" style="left:37.0px;top:132.89px;font-size:8.0px;line-height:10.0px;transform:scaleX(0.821);color:#111;">Default with Element</div>
<svg style="left:25.1px;top:133.49px" width="9" height="9" viewBox="0 0 9 9"><rect x=".4" y=".4" width="8.1" height="8.1" fill="#a4a4a4" stroke="#606060" stroke-width=".8"/><rect x=".8" y=".8" width="7.3" height="1.6" fill="#48b048"/><rect x="1.5" y="2.9" width="2.3" height="5.2" fill="#505050"/><rect x="5.1" y="2.9" width="2.3" height="5.2" fill="#505050"/><path d="M2.65 3.7v1.2M2.65 6v1.3M6.25 3.7v1.2M6.25 6v1.3" stroke="#c8c8c8" stroke-width=".9"/><path d="M4.45 2.6v5.8" stroke="#e0e0e0" stroke-width=".7"/></svg>
<svg style="left:10.5px;top:145.52px" width="4" height="6" viewBox="0 0 4 6"><path d="M.5 .6v4.2L3 2.7z" fill="none" stroke="#a8a8a8" stroke-width=".7"/></svg>
<svg style="left:16.0px;top:144.12px" width="9" height="8" viewBox="0 0 9 8"><path d="M.5 1.6h3l.8.9h3.9v4.8H.5z" fill="#86dc74" stroke="#4cae3c" stroke-width=".7"/><path d="M1 3.4h6.7v1.2H1z" fill="#b4f0a4"/></svg>
<div class="t" style="left:28.0px;top:143.32px;font-size:8.0px;line-height:10.0px;transform:scaleX(0.802);color:#111;">Wait For</div>
</div>
<div class="a" style="left:240px;top:243.2px;width:36px;height:5.2px;background:#f6f6f6;border-right:1px solid #b0b0b0;border-bottom:1px solid #b0b0b0"></div>
<svg style="left:240.6px;top:244.2px" width="36" height="4" viewBox="0 0 36 4"><path d="M0 .4h4L2 2.8zM30.5 .4h4L32.5 2.8z" fill="#222"/><path d="M4 1.6h27" stroke="#555" stroke-width=".8" stroke-dasharray="1 1.2"/></svg>
<div class="t" style="left:240.6px;top:252.7px;font-size:8.0px;line-height:10.0px;transform:scaleX(0.799);color:#2c5ac8;">Eigenschaften</div>
<div class="a" style="left:238.8px;top:262.3px;width:166px;height:165px;background:#fff;border:1px solid #c4c4c4;border-left-color:#858585;border-top-color:#a8a8a8;border-right-color:#e2e2e2"></div>
<div class="clip" style="left:239.8px;top:263.3px;width:164px;height:155px">
<svg style="left:8.799999999999983px;top:3.3px" width="6" height="6" viewBox="0 0 6 6"><circle cx="3" cy="3" r="2.7" fill="#58c038" stroke="#2c8c1c" stroke-width=".6"/><path d="M1.2 3h3.6" stroke="#d8f8c8" stroke-width=".9"/></svg>
<div class="t" style="left:18.19999999999999px;top:1.5px;font-size:8.0px;line-height:10.0px;transform:scaleX(0.741);">class</div>
<div class="t" style="left:62.80000000000001px;top:1.5px;font-size:8.0px;line-height:10.0px;transform:scaleX(0.858);">right middle</div>
<svg style="left:8.799999999999983px;top:13.8px" width="6" height="6" viewBox="0 0 6 6"><circle cx="3" cy="3" r="2.7" fill="#58c038" stroke="#2c8c1c" stroke-width=".6"/><path d="M1.2 3h3.6" stroke="#d8f8c8" stroke-width=".9"/></svg>
<div class="t" style="left:18.19999999999999px;top:12.0px;font-size:8.0px;line-height:10.0px;transform:scaleX(0.760);">style</div>
<svg style="left:8.799999999999983px;top:24.3px" width="6" height="6" viewBox="0 0 6 6"><circle cx="3" cy="3" r="2.7" fill="#58c038" stroke="#2c8c1c" stroke-width=".6"/><path d="M1.2 3h3.6" stroke="#d8f8c8" stroke-width=".9"/></svg>
<div class="t" style="left:18.19999999999999px;top:22.5px;font-size:8.0px;line-height:10.0px;transform:scaleX(0.825);">outerHTML</div>
<div class="t" style="left:62.80000000000001px;top:22.5px;font-size:8.0px;line-height:10.0px;transform:scaleX(0.830);">&lt;th class="right middle" expeccoid="12"</div>
</div>
<div class="a" style="left:239.8px;top:417.8px;width:164px;height:8.7px;background:#f0f0f0;"></div>
<div class="a" style="left:250px;top:419.3px;width:61.5px;height:7.2px;background:#cdcdcd;"></div>
<svg style="left:243px;top:420.5px" width="3" height="4" viewBox="0 0 3 4"><path d="M2.6 0v4L0 2z" fill="#444"/></svg>
<svg style="left:398.5px;top:420.5px" width="3" height="4" viewBox="0 0 3 4"><path d="M0 0v4l2.6-2z" fill="#444"/></svg>
<div class="a" style="left:237.6px;top:429px;width:82px;height:15.5px;background:#e9e9e9;border:1px solid #4a4a4a;border-radius:1px;box-shadow:inset 0 0 0 1px #f8f8f8"></div>
<div class="t" style="left:255px;top:432.0px;font-size:8.0px;line-height:10.0px;transform:scaleX(0.819);color:#111;">Pfad überprüfen</div>
<div class="a" style="left:406.6px;top:64.3px;width:5.8px;height:36.4px;background:#f7f7f7;border-right:1px solid #a8a8a8;border-bottom:1px solid #b0b0b0"></div>
<svg style="left:406.5px;top:66px" width="6" height="34" viewBox="0 0 6 34"><path d="M3.4 0v4L.6 2zM3.4 29v4L.6 31z" fill="#222"/><path d="M2.6 4.5v24" stroke="#555" stroke-width=".8" stroke-dasharray="1 1.2"/></svg>
<div class="a" style="left:530.8px;top:66.5px;width:144.6px;height:11px;background:#f6f6f6;border:1px solid #b0b0b0;border-radius:1.5px 1.5px 0 0"></div>
<div class="t" style="left:581.5px;top:66.6px;font-size:8.0px;line-height:10.0px;transform:scaleX(0.831);">Arbeitsbereich</div>
<div class="a" style="left:675px;top:66.5px;width:117px;height:11px;background:#f6f6f6;border:1px solid #b0b0b0;border-radius:1.5px 1.5px 0 0"></div>
<div class="t" style="left:727px;top:66.6px;font-size:8.0px;line-height:10.0px;transform:scaleX(0.771);">Lauf</div>
<div class="a" style="left:413.3px;top:64.6px;width:118px;height:13.2px;background:#f0f0f0;border:1px solid #b0b0b0;border-bottom:none;border-top:2px solid #f7b038;border-radius:1.5px 1.5px 0 0"></div>
<div class="t" style="left:466.3px;top:66.4px;font-size:8.0px;line-height:10.0px;transform:scaleX(0.818);">Test</div>
<div class="a" style="left:413.3px;top:77.6px;width:379.7px;height:350.4px;background:#f0f0f0;border:1px solid #b4b4b4;border-top:none;border-left-color:#9c9c9c"></div>
<div class="a" style="left:414.3px;top:94.3px;width:377.7px;height:1px;background:#b4b4b4;"></div>
<svg style="left:417px;top:81.5px" width="11" height="11" viewBox="0 0 11 11"><circle cx="4.6" cy="4.6" r="3.9" fill="#e02424" stroke="#a01010" stroke-width=".7"/><rect x="2.2" y="3.8" width="4.8" height="1.6" fill="#fff"/><path d="M6.4 6.4l3 3" stroke="#8a6a20" stroke-width="1.4"/><circle cx="8.4" cy="8.6" r="1.3" fill="#5aa02a"/></svg>
<div class="a" style="left:433px;top:80px;width:1px;height:13px;background:#cfcfcf;"></div>
<svg style="left:441px;top:82px" width="7" height="10" viewBox="0 0 7 10"><path d="M.6 .6v8.4L6.2 4.8z" fill="#38b418" stroke="#2a8a12" stroke-width=".6"/></svg>
<div class="a" style="left:771.4px;top:80px;width:1px;height:13px;background:#cfcfcf;"></div>
<svg style="left:777.5px;top:81.5px" width="11" height="10" viewBox="0 0 11 10"><rect x=".5" y=".5" width="9.8" height="8.6" rx=".8" fill="#f4f4f4" stroke="#444" stroke-width=".8"/><path d="M.5 2.4h9.8" stroke="#444" stroke-width="1"/><path d="M6.2 4v4M7.6 4v4M9 4v4" stroke="#777" stroke-width=".6"/><path d="M1.6 5.8h3M3.4 4.4l1.4 1.4-1.4 1.4" stroke="#222" stroke-width=".8" fill="none"/></svg>
<div class="a" style="left:414.3px;top:111.3px;width:377.7px;height:1px;background:#b4b4b4;"></div>
<svg style="left:780.6px;top:98.6px" width="9" height="9" viewBox="0 0 9 9"><circle cx="4.5" cy="4.5" r="4.2" fill="#4a82e4" stroke="#8fb4f4" stroke-width=".6"/><text x="4.5" y="7.1" font-size="6.8" font-weight="bold" fill="#fff" text-anchor="middle" font-family="Liberation Sans, sans-serif">?</text></svg>
<div class="a" style="left:414.3px;top:112.3px;width:369px;height:305.6px;background:#fff;"></div>
<div class="a" style="left:783.3px;top:112.3px;width:8.7px;height:305.6px;background:#f0f0f0;"></div>
<div class="a" style="left:784.2px;top:122.5px;width:7.6px;height:240.2px;background:#cdcdcd;"></div>
<svg style="left:785.6px;top:116px" width="4" height="3" viewBox="0 0 4 3"><path d="M0 2.6L2 0l2 2.6z" fill="#444"/></svg>
<svg style="left:785.6px;top:410.5px" width="4" height="3" viewBox="0 0 4 3"><path d="M0 0h4L2 2.6z" fill="#444"/></svg>
<div class="a" style="left:414.3px;top:417.9px;width:377.7px;height:9.1px;background:#f0f0f0;"></div>
<div class="a" style="left:424.5px;top:419.3px;width:284px;height:7.2px;background:#cdcdcd;"></div>
<svg style="left:418px;top:420.6px" width="3" height="4" viewBox="0 0 3 4"><path d="M2.6 0v4L0 2z" fill="#444"/></svg>
<svg style="left:776.4px;top:420.6px" width="3" height="4" viewBox="0 0 3 4"><path d="M0 0v4l2.6-2z" fill="#444"/></svg>
<svg style="left:516.6px;top:131.6px" width="7" height="7" viewBox="0 0 7 7"><circle cx="3.3" cy="3.3" r="2.5" fill="#b4b4b4" stroke="#9a9a9a" stroke-width="1.1" stroke-dasharray="1 .55"/><circle cx="3.3" cy="3.3" r=".7" fill="#e8e8e8"/></svg>
<svg style="left:520px;top:136px" width="48" height="52" viewBox="0 0 48 52"><rect x="5.4" y="4.6" width="37.8" height="42.2" fill="#e8ecf0" stroke="#fc0808" stroke-width="1.8"/><rect x="6.3" y="5.5" width="36" height="13.8" fill="#5b7a93"/></svg>
<div class="t" style="left:533.4px;top:143.6px;font-size:8.0px;line-height:10.0px;transform:scaleX(0.762);color:#fff;">Get Text</div>
<div class="t" style="left:527px;top:157.2px;font-size:8.0px;line-height:10.0px;transform:scaleX(0.770);color:#111;">locator</div>
<div class="t" style="left:551.8px;top:157.2px;font-size:8.0px;line-height:10.0px;transform:scaleX(0.760);color:#111;">text</div>
<div class="t" style="left:527px;top:166.0px;font-size:8.0px;line-height:10.0px;transform:scaleX(0.800);color:#111;">timeout</div>
<div class="a" style="left:519.2px;top:160.8px;width:5.6px;height:0.9px;background:#9a9a9a;"></div>
<div class="a" style="left:520px;top:160px;width:2px;height:2.2px;background:#b0b0b0;"></div>
<div class="a" style="left:518.8px;top:169.2px;width:3px;height:2.6px;background:#111;"></div>
<div class="a" style="left:521.8px;top:170.1px;width:3px;height:0.9px;background:#333;"></div>
<div class="a" style="left:564px;top:160.8px;width:3.4px;height:0.9px;background:#333;"></div>
<div class="a" style="left:567px;top:159.8px;width:2.8px;height:2.8px;background:#fff;border:.8px solid #222"></div>
<div class="a" style="left:415.6px;top:157px;width:103.8px;height:8.6px;background:#fff;border:1px solid #555"></div>
<div class="t" style="left:419.2px;top:156.7px;font-size:8.0px;line-height:10.0px;transform:scaleX(0.825);color:#f01cf0;text-shadow:0 0 .6px #f48af4;">//body/div[@clas.../e/tbody/tr[1]/th</div>
<div class="a" style="left:322px;top:429px;width:459.4px;height:16px;background:#fff;border:1px solid #a8bcf0"></div>
<div class="a" style="left:769.6px;top:430px;width:10.8px;height:14px;background:#f2f2f2;"></div>
<svg style="left:773px;top:436px" width="5" height="3" viewBox="0 0 5 3"><path d="M0 0h4.2L2.1 2.5z" fill="#333"/></svg>
<div class="clip" style="left:323px;top:430px;width:446px;height:14px"><div class="a" style="left:0.6px;top:3px;font-family:'Liberation Mono',monospace;font-size:7.3px;line-height:10px;white-space:nowrap;color:#333;-webkit-text-stroke:.1px #333">lass="titleArea"]/table/tbody/tr/td[@class="headerColumnWithSelectBox center"]/table/tbody/tr[1]/th</div></div>
<svg style="left:784px;top:431.5px" width="10" height="9" viewBox="0 0 10 9"><rect x=".5" y=".5" width="3" height="2.6" fill="#b8c8e8" stroke="#5878b0" stroke-width=".6"/><rect x="3" y="5" width="3" height="2.6" fill="#b8c8e8" stroke="#5878b0" stroke-width=".6"/><path d="M2 3.2v3.2h1" fill="none" stroke="#5878b0" stroke-width=".6"/><text x="7.6" y="7" font-size="6.4" font-weight="bold" fill="#444" text-anchor="middle" font-family="Liberation Sans, sans-serif">?</text></svg>
<div class="a" style="left:4.3px;top:447px;width:791px;height:1px;background:#b9b9b9;"></div>
<div class="a" style="left:4.3px;top:448px;width:791px;height:12.4px;background:#f1f1f1;"></div>
<div class="t" style="left:8px;top:449.8px;font-size:8.0px;line-height:10.0px;transform:scaleX(0.814);color:#222;">"Get Text" from "SeleniumWebDriverLibrary" (Elements)</div>
<div class="a" style="left:388.5px;top:449px;width:1px;height:11px;background:#cfcfcf;"></div>
<div class="t" style="left:393px;top:449.8px;font-size:8.0px;line-height:10.0px;transform:scaleX(0.772);color:#222;">expecco</div>
<div class="a" style="left:759px;top:449px;width:1px;height:11px;background:#cfcfcf;"></div>
<div class="a" style="left:772.4px;top:449px;width:1px;height:11px;background:#cfcfcf;"></div>
<svg style="left:760.8px;top:450px" width="9" height="9" viewBox="0 0 9 9"><circle cx="4.3" cy="4.3" r="3.6" fill="#ececec" stroke="#a8a8a8" stroke-width=".8"/><path d="M.8 4.3h7" stroke="#a8a8a8" stroke-width=".8"/></svg>
</body></html>
